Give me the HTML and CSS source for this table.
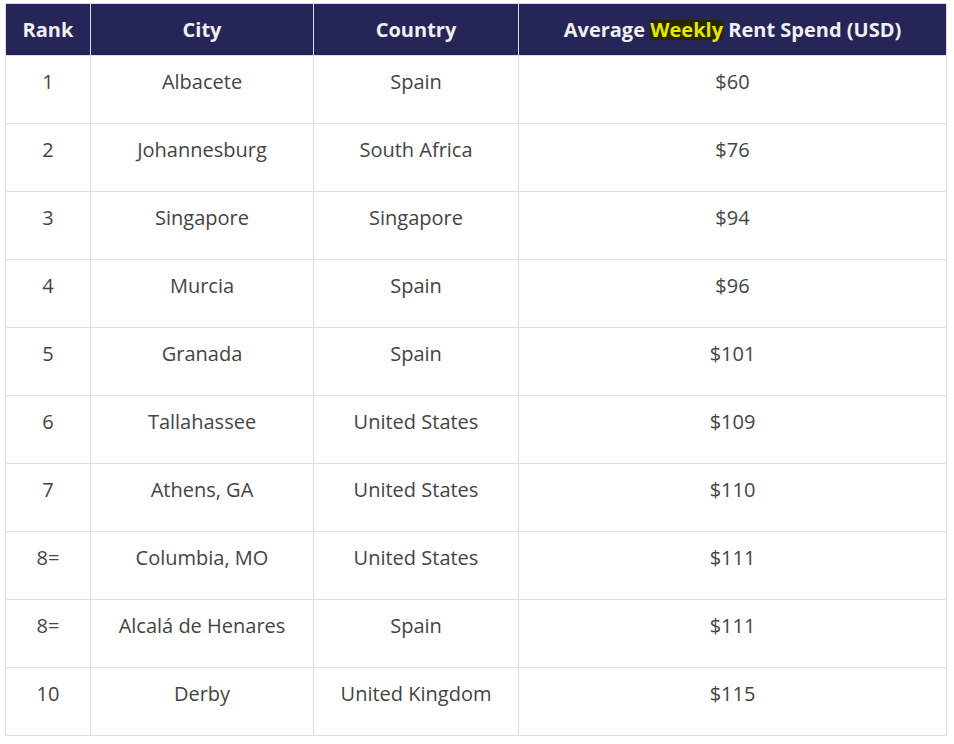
FILE: index.html
```html
<!DOCTYPE html>
<html>
<head>
<meta charset="utf-8">
<link rel="stylesheet" href="styles.css">
</head>
<body>
<table class="rent">
<colgroup>
<col class="c1"><col class="c2"><col class="c3"><col class="c4">
</colgroup>
<thead>
<tr><th>Rank</th><th>City</th><th>Country</th><th>Average <mark class="hl">Weekly</mark> Rent Spend (USD)</th></tr>
</thead>
<tbody>
<tr><td>1</td><td>Albacete</td><td>Spain</td><td>$60</td></tr>
<tr><td>2</td><td>Johannesburg</td><td>South Africa</td><td>$76</td></tr>
<tr><td>3</td><td>Singapore</td><td>Singapore</td><td>$94</td></tr>
<tr><td>4</td><td>Murcia</td><td>Spain</td><td>$96</td></tr>
<tr><td>5</td><td>Granada</td><td>Spain</td><td>$101</td></tr>
<tr><td>6</td><td>Tallahassee</td><td>United States</td><td>$109</td></tr>
<tr><td>7</td><td>Athens, GA</td><td>United States</td><td>$110</td></tr>
<tr><td>8=</td><td>Columbia, MO</td><td>United States</td><td>$111</td></tr>
<tr><td>8=</td><td>Alcalá de Henares</td><td>Spain</td><td>$111</td></tr>
<tr><td>10</td><td>Derby</td><td>United Kingdom</td><td>$115</td></tr>
</tbody>
</table>
</body>
</html>
```
FILE: styles.css
```css
html, body {
  margin: 0;
  background: #fff;
}
body {
  padding: 3px 0 0 5px;
  font-family: "Open Sans", "Liberation Sans", sans-serif;
}
.rent {
  border-collapse: collapse;
  table-layout: fixed;
  width: 941px;
}
.c1 { width: 85px; }
.c2 { width: 223px; }
.c3 { width: 205px; }
.c4 { width: 428px; }
.rent th, .rent td {
  border: 1px solid #dddddd;
  text-align: center;
  font-size: 20px;
  line-height: 30px;
}
.rent th {
  background: #262558;
  color: #f0f0f0;
  font-weight: 700;
  height: 52px;
  padding: 0 10px;
  box-sizing: border-box;
}
.rent td {
  color: #444444;
  height: 68px;
  padding: 11px 10px 24px;
  box-sizing: border-box;
  vertical-align: top;
}
.hl {
  background: linear-gradient(to bottom, transparent 4px, #262600 4px, #262600 24px, transparent 24px);
  color: #e4e400;
  padding: 0;
}
```
